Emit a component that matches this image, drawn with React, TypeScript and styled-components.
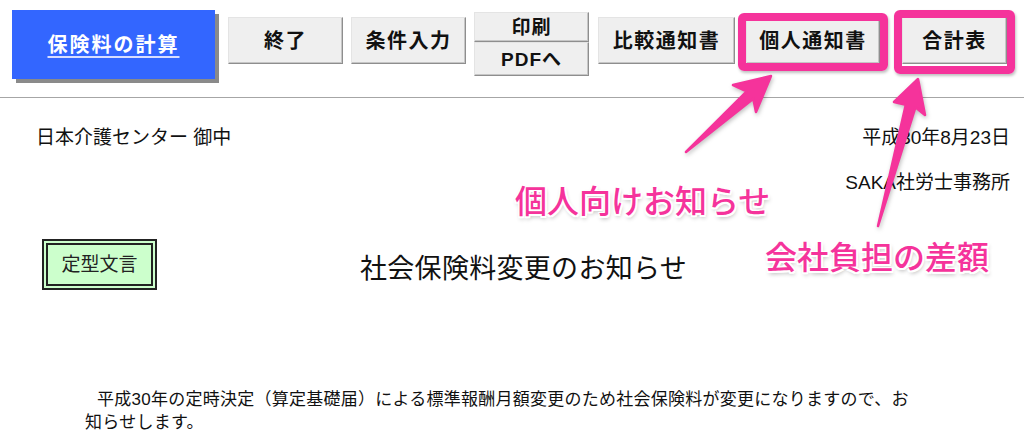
import styled, { createGlobalStyle } from 'styled-components';

const PINK = '#f5339b';
const FONT = `"Liberation Sans", "Noto Sans CJK JP", sans-serif`;

const GlobalStyle = createGlobalStyle`
  html, body {
    margin: 0;
    padding: 0;
    background: #fff;
  }
  body {
    font-family: ${FONT};
    color: #111;
  }
`;

const Page = styled.div`
  position: relative;
  width: 1024px;
  height: 432px;
  overflow: hidden;
  background: #fff;
`;

const Toolbar = styled.header`
  display: flex;
  align-items: flex-start;
  gap: 8px;
  height: 98px;
  box-sizing: border-box;
  padding: 10px 0 0 12px;
  border-bottom: 1px solid #a6a6a6;
`;

const TitleButton = styled.button`
  flex: none;
  width: 203px;
  height: 69px;
  margin-right: 5px;
  padding: 0;
  border: none;
  background: #3366ff;
  box-shadow: 4px 4px 0 #8a8a8a;
  color: #fff;
  font: bold 20px/1 ${FONT};
  letter-spacing: 2px;
  text-decoration: underline;
  text-decoration-color: #d8ddff;
  text-underline-offset: 4px;
`;

const ToolButton = styled.button<{ $w: number; $ml?: number }>`
  flex: none;
  width: ${p => p.$w}px;
  height: 47px;
  margin-top: 7px;
  margin-left: ${p => p.$ml ?? 0}px;
  padding: 0;
  background: #efefef;
  border: 1px solid;
  border-color: #e4e4e4 #8e8e8e #8e8e8e #e4e4e4;
  box-shadow: inset -1px -1px 0 #c6c6c6;
  color: #111;
  font: bold 20px/1 ${FONT};
  letter-spacing: 1.5px;
`;

const PrintStack = styled.div`
  flex: none;
  display: flex;
  flex-direction: column;
  width: 115px;
  margin-top: 2px;
`;

const PrintHalf = styled.button<{ $h: number }>`
  height: ${p => p.$h}px;
  padding: 0;
  background: #efefef;
  border: 1px solid;
  border-color: #e4e4e4 #8e8e8e #8e8e8e #e4e4e4;
  box-shadow: inset -1px -1px 0 #c6c6c6;
  color: #111;
  font: bold 19px/1 ${FONT};
  letter-spacing: 1px;
`;

const Letter = styled.main`
  padding: 30px 14px 0 36px;
  font-size: 19px;
  line-height: 1;
`;

const HeadRow = styled.div`
  display: flex;
  justify-content: space-between;
`;

const Sender = styled.div`
  margin-top: 26px;
  text-align: right;
`;

const NoticeRow = styled.div`
  display: flex;
  align-items: flex-start;
  margin-top: 47px;
`;

const TemplateTag = styled.div`
  flex: none;
  display: flex;
  align-items: center;
  justify-content: center;
  width: 115px;
  height: 51px;
  margin-left: 6px;
  box-sizing: border-box;
  border: 6px double #222;
  background: #ccffcc;
  font-size: 19px;
  color: #222;
`;

const Heading = styled.h1`
  margin: 17px 0 0 203px;
  font-size: 27px;
  font-weight: normal;
  line-height: 1;
  letter-spacing: 0.3px;
`;

const Body = styled.p`
  margin: 98px 0 0 49px;
  font-size: 17px;
  line-height: 23px;
  letter-spacing: 0.25px;
  text-indent: 12px;
  white-space: nowrap;
`;

const Frame = styled.div<{ $x: number; $y: number; $w: number; $h: number }>`
  position: absolute;
  left: ${p => p.$x}px;
  top: ${p => p.$y}px;
  width: ${p => p.$w}px;
  height: ${p => p.$h}px;
  box-sizing: border-box;
  border: 8px solid ${PINK};
  border-radius: 6px;
  box-shadow: 1px 2px 3px rgba(0, 0, 0, 0.25);
`;

const Note = styled.div<{ $x: number; $y: number }>`
  position: absolute;
  left: ${p => p.$x}px;
  top: ${p => p.$y}px;
  font: 500 32px/1 "Noto Sans CJK JP", sans-serif;
  color: ${PINK};
  white-space: nowrap;
  text-shadow:
    -1.5px -1.5px 0 #fff, 1.5px -1.5px 0 #fff, -1.5px 1.5px 0 #fff, 1.5px 1.5px 0 #fff,
    0 2px 0 #fff, 2px 0 0 #fff, 1px 3px 4px rgba(0, 0, 0, 0.3);
`;

const ArrowLayer = styled.svg`
  position: absolute;
  left: 0;
  top: 0;
  pointer-events: none;
  filter: drop-shadow(1px 2px 2px rgba(0, 0, 0, 0.25));
`;

const Arrows = () => (
  <ArrowLayer width="1024" height="432" viewBox="0 0 1024 432">
    <g fill={PINK} stroke={PINK} strokeWidth="2.5" strokeLinejoin="round">
      <polygon points="686,152 746.7,91.3 733,85 771,76 756,112 753.3,98.7" />
      <polygon points="878,226 905.8,104.7 894,102 918,79 925,115 915.4,107.3" />
    </g>
  </ArrowLayer>
);

export default function App() {
  return (
    <>
      <GlobalStyle />
      <Page>
        <Toolbar>
          <TitleButton>保険料の計算</TitleButton>
          <ToolButton $w={115}>終了</ToolButton>
          <ToolButton $w={115}>条件入力</ToolButton>
          <PrintStack>
            <PrintHalf $h={30}>印刷</PrintHalf>
            <PrintHalf $h={34}>PDFへ</PrintHalf>
          </PrintStack>
          <ToolButton $w={137} $ml={1}>比較通知書</ToolButton>
          <ToolButton $w={134} $ml={3}>個人通知書</ToolButton>
          <ToolButton $w={105} $ml={14}>合計表</ToolButton>
        </Toolbar>

        <Letter>
          <HeadRow>
            <span>日本介護センター 御中</span>
            <span>平成30年8月23日</span>
          </HeadRow>
          <Sender>SAKA社労士事務所</Sender>
          <NoticeRow>
            <TemplateTag>定型文言</TemplateTag>
            <Heading>社会保険料変更のお知らせ</Heading>
          </NoticeRow>
          <Body>
            平成30年の定時決定（算定基礎届）による標準報酬月額変更のため社会保険料が変更になりますので、お
            <br />
            知らせします。
          </Body>
        </Letter>

        <Frame $x={738} $y={13} $w={150} $h={58} />
        <Frame $x={894} $y={10} $w={121} $h={64} />
        <Note $x={515} $y={183}>個人向けお知らせ</Note>
        <Note $x={765} $y={239}>会社負担の差額</Note>
        <Arrows />
      </Page>
    </>
  );
}
